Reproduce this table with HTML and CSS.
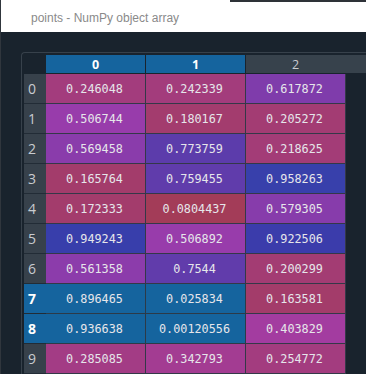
FILE: index.html
```html
<!DOCTYPE html>
<html>
<head>
<meta charset="utf-8">
<link rel="stylesheet" href="styles.css">
</head>
<body>
<div class="app">
  <div class="titlebar">
    <div class="title">points - NumPy object array</div>
  </div>
  <div class="content">
    <div class="frame">
      <div class="hrow">
        <div class="corner"></div>
        <div class="ch sel">0</div>
        <div class="ch sel">1</div>
        <div class="ch last">2</div>
        <div class="fill"></div>
      </div>
      <div class="row"><div class="rh">0</div><div class="cell" style="background:hsla(326.0,100%,65%,.6)">0.246048</div><div class="cell" style="background:hsla(326.5,100%,65%,.6)">0.242339</div><div class="cell" style="background:hsla(279.9,100%,65%,.6)">0.617872</div></div>
      <div class="row"><div class="rh">1</div><div class="cell" style="background:hsla(293.6,100%,65%,.6)">0.506744</div><div class="cell" style="background:hsla(334.2,100%,65%,.6)">0.180167</div><div class="cell" style="background:hsla(331.1,100%,65%,.6)">0.205272</div></div>
      <div class="row"><div class="rh">2</div><div class="cell" style="background:hsla(285.9,100%,65%,.6)">0.569458</div><div class="cell" style="background:hsla(260.5,100%,65%,.6)">0.773759</div><div class="cell" style="background:hsla(329.4,100%,65%,.6)">0.218625</div></div>
      <div class="row"><div class="rh">3</div><div class="cell" style="background:hsla(336.0,100%,65%,.6)">0.165764</div><div class="cell" style="background:hsla(262.3,100%,65%,.6)">0.759455</div><div class="cell" style="background:hsla(237.6,100%,65%,.6)">0.958263</div></div>
      <div class="row"><div class="rh">4</div><div class="cell" style="background:hsla(335.2,100%,65%,.6)">0.172333</div><div class="cell" style="background:hsla(346.6,100%,65%,.6)">0.0804437</div><div class="cell" style="background:hsla(284.6,100%,65%,.6)">0.579305</div></div>
      <div class="row"><div class="rh">5</div><div class="cell" style="background:hsla(238.7,100%,65%,.6)">0.949243</div><div class="cell" style="background:hsla(293.6,100%,65%,.6)">0.506892</div><div class="cell" style="background:hsla(242.0,100%,65%,.6)">0.922506</div></div>
      <div class="row"><div class="rh">6</div><div class="cell" style="background:hsla(286.9,100%,65%,.6)">0.561358</div><div class="cell" style="background:hsla(262.9,100%,65%,.6)">0.7544</div><div class="cell" style="background:hsla(331.7,100%,65%,.6)">0.200299</div></div>
      <div class="row"><div class="rh sel">7</div><div class="cell sel">0.896465</div><div class="cell sel">0.025834</div><div class="cell" style="background:hsla(336.2,100%,65%,.6)">0.163581</div></div>
      <div class="row"><div class="rh sel">8</div><div class="cell sel">0.936638</div><div class="cell sel">0.00120556</div><div class="cell" style="background:hsla(306.4,100%,65%,.6)">0.403829</div></div>
      <div class="row"><div class="rh">9</div><div class="cell" style="background:hsla(321.2,100%,65%,.6)">0.285085</div><div class="cell" style="background:hsla(314.0,100%,65%,.6)">0.342793</div><div class="cell" style="background:hsla(324.9,100%,65%,.6)">0.254772</div></div>
    </div>
  </div>
</div>
</body>
</html>
```
FILE: styles.css
```css
* { box-sizing: border-box; }
html, body {
  margin: 0;
  padding: 0;
  height: 100%;
  overflow: hidden;
  background: #19232d;
}
.app {
  height: 374px;
  border-left: 1px solid #30363d;
  display: flex;
  flex-direction: column;
}
.titlebar {
  height: 32px;
  flex: none;
  background: linear-gradient(#2e3238, #2e3238) no-repeat 229px 0 / 100% 2px, #ffffff;
  display: flex;
  align-items: center;
  padding: 3px 0 0 30px;
}
.title {
  font-family: "Liberation Sans", Arial, sans-serif;
  font-size: 12px;
  color: #8a8a8a;
}
.content {
  flex: 1;
  padding: 20px 0 0 20px;
}
.frame {
  border-top: 1px solid #37414b;
  border-left: 1px solid #37414b;
  border-top-left-radius: 4px;
  padding: 2px 0 0 2px;
}
.hrow {
  display: flex;
  height: 19px;
}
.corner {
  width: 22px;
  flex: none;
}
.ch {
  width: 100px;
  flex: none;
  display: flex;
  align-items: center;
  justify-content: center;
  background: #37424c;
  border-right: 1px solid #19232d;
  border-bottom: 1px solid #19232d;
  font-family: "Open Sans", "DejaVu Sans", sans-serif;
  font-size: 12.5px;
  color: #c9ccd0;
}
.ch.last {
  border-right: none;
  width: 99px;
}
.ch.sel {
  background: #15649e;
  color: #ffffff;
  font-weight: bold;
}
.fill {
  flex: 1;
  background: #37424c;
  border-bottom: 1px solid #19232d;
}
.row {
  display: flex;
  height: 30px;
}
.rh {
  width: 22px;
  flex: none;
  display: flex;
  align-items: center;
  padding-left: 4px;
  background: #37414b;
  border-bottom: 1px solid #222c36;
  font-family: "Open Sans", "DejaVu Sans", sans-serif;
  font-size: 14px;
  color: #c9ccd0;
}
.rh.sel {
  background: #15649e;
  color: #ffffff;
  font-weight: bold;
}
.cell {
  width: 100px;
  flex: none;
  display: flex;
  align-items: center;
  justify-content: center;
  padding-right: 2px;
  border-right: 1px solid #343848;
  border-bottom: 1px solid #343848;
  font-family: "DejaVu Sans Mono", monospace;
  font-size: 11.8px;
  color: #e6e6ea;
}
.cell.sel {
  background: #15649e;
  border-color: #2c3a48;
}
```
